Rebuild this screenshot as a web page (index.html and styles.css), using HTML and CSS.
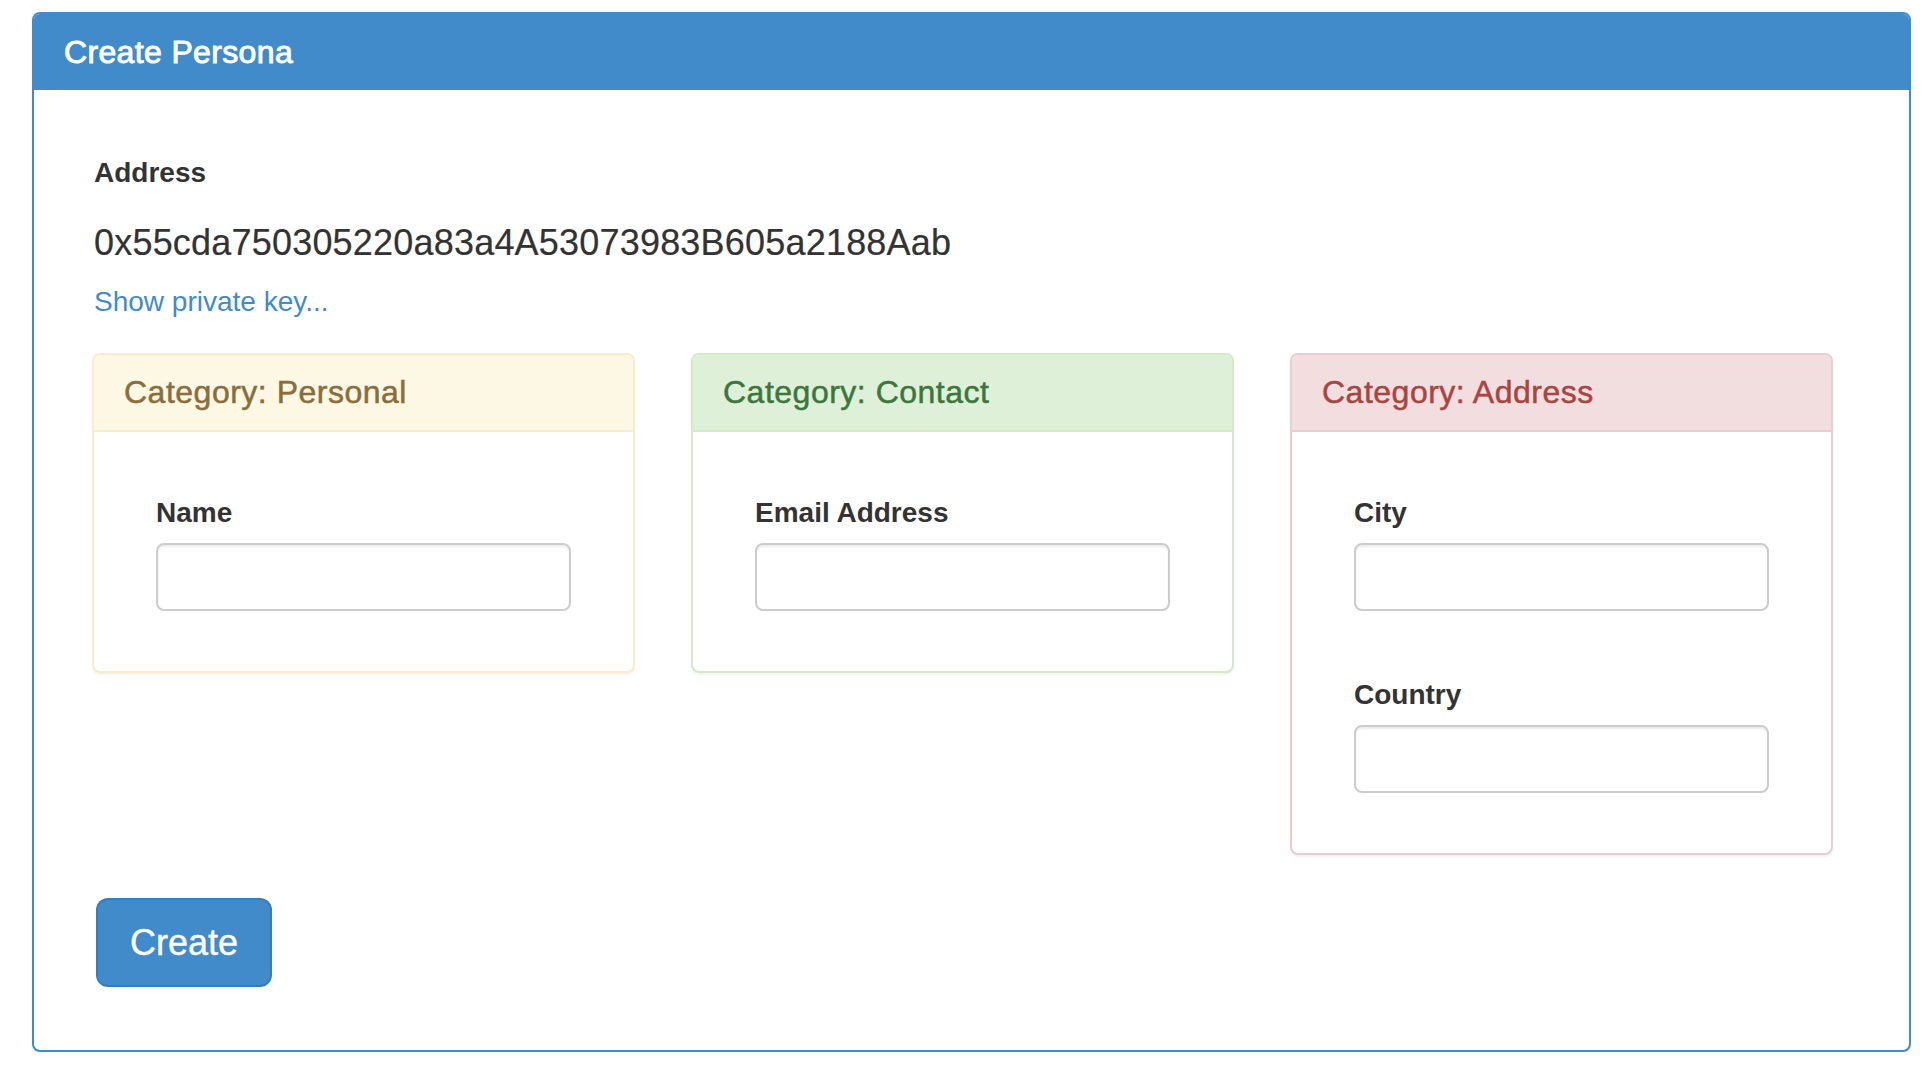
FILE: index.html
```html
<!DOCTYPE html>
<html>
<head>
<meta charset="utf-8">
<title>Create Persona</title>
<link rel="stylesheet" href="styles.css">
</head>
<body>
<div class="panel panel-primary">
  <div class="panel-heading"><h3 class="panel-title">Create Persona</h3></div>
  <div class="panel-body">
    <div class="field-top">
      <label class="lbl">Address</label>
      <h4 class="address">0x55cda750305220a83a4A53073983B605a2188Aab</h4>
      <a class="link" href="#">Show private key...</a>
    </div>
    <div class="cards">
      <div class="card card-warning">
        <div class="card-heading"><h3 class="card-title">Category: Personal</h3></div>
        <div class="card-body">
          <div class="field"><label class="lbl">Name</label><input class="input" type="text"></div>
        </div>
      </div>
      <div class="card card-success">
        <div class="card-heading"><h3 class="card-title">Category: Contact</h3></div>
        <div class="card-body">
          <div class="field"><label class="lbl">Email Address</label><input class="input" type="text"></div>
        </div>
      </div>
      <div class="card card-danger">
        <div class="card-heading"><h3 class="card-title">Category: Address</h3></div>
        <div class="card-body">
          <div class="field"><label class="lbl">City</label><input class="input" type="text"></div>
          <div class="field"><label class="lbl">Country</label><input class="input" type="text"></div>
        </div>
      </div>
    </div>
    <button class="btn" type="button">Create</button>
  </div>
</div>
</body>
</html>
```
FILE: styles.css
```css
* { box-sizing: border-box; }
html, body { margin: 0; padding: 0; background: #fff; }
body {
  font-family: "Liberation Sans", Arial, Helvetica, sans-serif;
  font-size: 28px;
  line-height: 40px;
  color: #333;
}
.panel {
  width: 1879px;
  margin: 12px 0 0 32px;
  border: 2px solid #428bca;
  border-radius: 8px;
  box-shadow: 0 2px 2px rgba(0,0,0,0.06);
  background: #fff;
}
.panel-heading {
  background: #428bca;
  padding: 20px 30px 20px 30px;
  border-radius: 6px 6px 0 0;
}
.panel-title {
  margin: 0;
  font-size: 32px;
  line-height: 36px;
  font-weight: normal;
  color: #fff;
  letter-spacing: 0.35px;
  -webkit-text-stroke: 0.9px #fff;
}
.panel-body {
  padding: 63px 76px 63px 60px;
}
.lbl {
  display: block;
  font-weight: bold;
  font-size: 28px;
  line-height: 40px;
  margin-bottom: 10px;
}
.field-top .lbl { margin-bottom: 0; }
.address {
  margin: 30px 0 19px 0;
  font-size: 36px;
  line-height: 40px;
  font-weight: normal;
  color: #333;
  letter-spacing: 0.2px;
  -webkit-text-stroke: 0.2px #333;
}
.link {
  display: block;
  color: #428bca;
  text-decoration: none;
  font-size: 28px;
  line-height: 40px;
}
.cards {
  display: grid;
  grid-template-columns: 543px 543px 543px;
  column-gap: 56px;
  align-items: start;
  margin-top: 31px;
  margin-left: -2px;
}
.card {
  border: 2px solid;
  border-radius: 8px;
  box-shadow: 0 2px 2px rgba(0,0,0,0.05);
  margin-bottom: 43px;
  background: #fff;
}
.card-heading {
  padding: 19px 30px 20px 30px;
  border-bottom: 2px solid;
  border-radius: 6px 6px 0 0;
}
.card-title {
  margin: 0;
  font-size: 32px;
  line-height: 36px;
  font-weight: normal;
  letter-spacing: 0.5px;
  -webkit-text-stroke: 0.5px currentColor;
}
.card-warning { border-color: #faebcc; }
.card-warning .card-heading { background: #fcf8e3; border-color: #faebcc; color: #8a6d3b; }
.card-success { border-color: #d6e9c6; }
.card-success .card-heading { background: #dff0d8; border-color: #d6e9c6; color: #3c763d; }
.card-danger { border-color: #ebccd1; }
.card-danger .card-heading { background: #f2dede; border-color: #ebccd1; color: #a94442; }
.card-body {
  padding: 30px 62px;
}
.field {
  padding-top: 31px;
  margin-bottom: 30px;
}
.field + .field { padding-top: 34px; }
.input {
  display: block;
  width: 100%;
  height: 68px;
  border: 2px solid #ccc;
  border-radius: 8px;
  box-shadow: inset 0 2px 2px rgba(0,0,0,0.075);
  background: #fff;
  font: inherit;
  padding: 12px 24px;
}
.btn {
  display: inline-block;
  margin-left: 2px;
  font-family: inherit;
  font-size: 36px;
  line-height: 45px;
  padding: 20px 32px;
  color: #fff;
  background: #428bca;
  border: 2px solid #357ebd;
  border-radius: 12px;
  cursor: pointer;
  -webkit-text-stroke: 0.4px #fff;
}
```
